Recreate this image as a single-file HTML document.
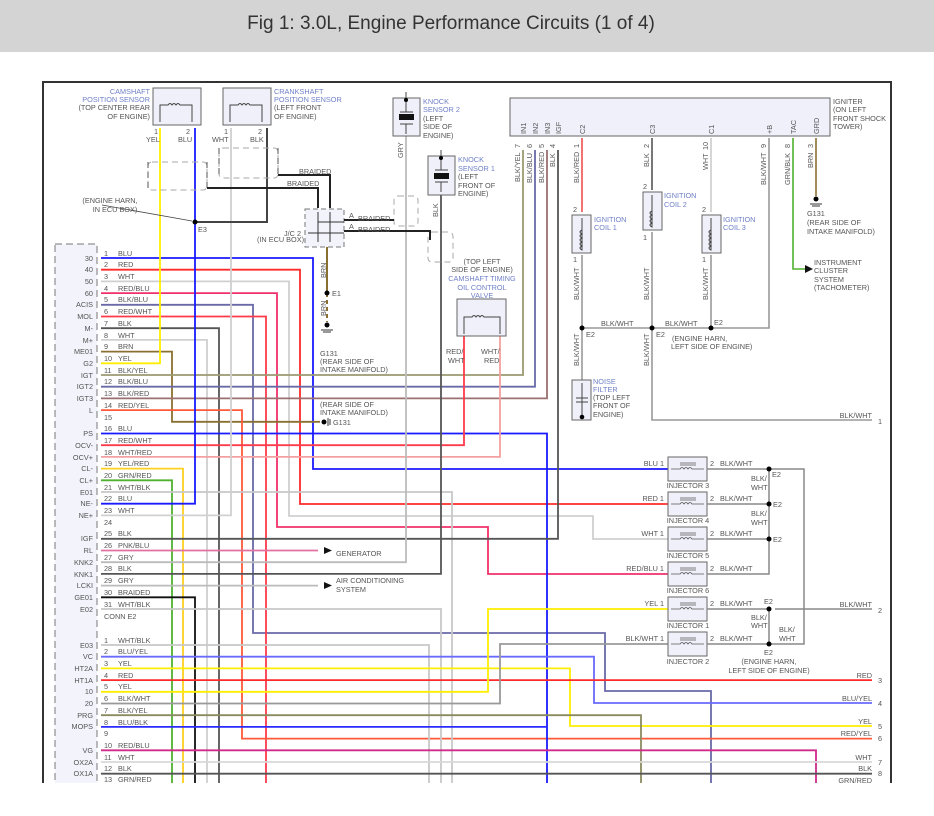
<!DOCTYPE html>
<html><head><meta charset="utf-8"><style>
html,body{margin:0;padding:0;background:#fff;width:934px;height:816px;overflow:hidden}
.hdr{position:absolute;left:0;top:0;width:934px;height:52px;background:#d4d4d4}
.hdr div{position:absolute;left:-16px;width:934px;top:13px;text-align:center;font:19px "Liberation Sans",sans-serif;color:#333}
svg{position:absolute;left:0;top:0}
text{font-family:"Liberation Sans",sans-serif;font-size:7.3px;fill:#555}
.c{fill:#7080c8}
.r{text-anchor:end}
.m{text-anchor:middle}
.w{fill:none;stroke-width:1.8}
</style></head><body>
<div class="hdr"><div>Fig 1: 3.0L, Engine Performance Circuits (1 of 4)</div></div>
<svg width="934" height="816" viewBox="0 0 934 816">
<rect x="0" y="783" width="934" height="33" fill="#fff"/>
<path d="M43 783V82H891V783" fill="none" stroke="#333" stroke-width="2"/>
<rect x="55" y="244" width="42" height="545" fill="#f3f3fc" stroke="#777" stroke-dasharray="7,4"/>

<g class="w">
<polyline stroke="#1a1aff" points="101,258 313,258 313,469 668,469"/>
<polyline stroke="#ff2a2a" points="101,269.7 300,269.7 300,504 668,504"/>
<polyline stroke="#d0d0d0" points="101,281.4 289,281.4 289,516 593,516 593,539 668,539"/>
<polyline stroke="#f0306a" points="101,293.1 277,293.1 277,527 488,527 488,574 668,574"/>
<polyline stroke="#6a6aa8" points="101,304.8 253,304.8 253,633 605,633 605,691 711,691 711,790"/>
<polyline stroke="#ff3a4a" points="101,316.5 266,316.5 266,790"/>
<polyline stroke="#555" points="101,328.2 219,328.2 219,790"/>
<polyline stroke="#d0d0d0" points="101,339.9 207,339.9 207,790"/>
<polyline stroke="#8a7030" points="101,351.6 172,351.6 172,421.8 320,421.8"/>
<polyline stroke="#ffee00" points="160,128 160,363.3 101,363.3"/>
<polyline stroke="#9a9a70" points="101,375 523,375 523,150"/>
<polyline stroke="#6a6aa8" points="101,386.7 535,386.7 535,150"/>
<polyline stroke="#9a7070" points="101,398.4 547,398.4 547,150"/>
<polyline stroke="#ff5a3a" points="101,410.1 242,410.1 242,738.6 872,738.6"/>
<polyline stroke="#1a1aff" points="101,433.5 547,433.5 547,790"/>
<polyline stroke="#ff3a4a" points="101,445.2 464,445.2 464,335"/>
<polyline stroke="#f4a0a0" points="101,456.9 500,456.9 500,335"/>
<polyline stroke="#ffd020" points="101,468.6 183,468.6 183,790"/>
<polyline stroke="#50b030" points="101,480.3 172,480.3 172,790"/>
<polyline stroke="#c8c8c8" points="101,492 452,492 452,790"/>
<polyline stroke="#1a1aff" points="195,128 195,503.7 101,503.7"/>
<polyline stroke="#d0d0d0" points="231,128 231,515.4 101,515.4"/>
<polyline stroke="#555" points="101,538.8 558,538.8 558,150"/>
<polyline stroke="#e070a0" points="101,550.5 318,550.5"/>
<polyline stroke="#bbb" points="101,562.2 406,562.2 406,136"/>
<polyline stroke="#555" points="101,573.9 441,573.9 441,195"/>
<polyline stroke="#bbb" points="101,585.6 318,585.6"/>
<polyline stroke="#111" points="101,597.3 195,597.3 195,790"/>
<polyline stroke="#c8c8c8" points="101,609 441,609 441,790"/>
<polyline stroke="#c8c8c8" points="101,645 429,645 429,790"/>
<polyline stroke="#6a6aff" points="101,656.7 594,656.7 594,703 872,703"/>
<polyline stroke="#ffee00" points="101,668.4 570,668.4 570,726 872,726"/>
<polyline stroke="#ff2a2a" points="101,680.1 872,680.1"/>
<polyline stroke="#ffee00" points="101,691.8 488,691.8 488,609 668,609"/>
<polyline stroke="#999" points="101,703.5 500,703.5 500,644 668,644"/>
<polyline stroke="#8a8a60" points="101,715.2 641,715.2 641,790"/>
<polyline stroke="#2a2aff" points="101,726.9 547,726.9"/>
<polyline stroke="#d02a8a" points="101,750.3 816,750.3 816,790"/>
<polyline stroke="#d8d8d8" points="101,762 872,762"/>
<polyline stroke="#555" points="101,773.7 872,773.7"/>
<polyline stroke="#50b030" points="101,785.4 872,785.4"/>
</g>
<polyline points="267,128 267,222 195,222" fill="none" stroke="#444" stroke-width="2"/>
<circle cx="195" cy="222" r="2.5" fill="#000"/>
<text x="198" y="232">E3</text>
<line x1="102" y1="205" x2="192" y2="221" stroke="#444" stroke-width="0.8"/>
<text x="110" y="203" style="text-anchor:middle">(ENGINE HARN,</text>
<text x="115" y="212" style="text-anchor:middle">IN ECU BOX)</text>

<g fill="none" stroke="#aaa" stroke-dasharray="6,4">
<rect x="148" y="162" width="59" height="28" rx="4"/>
<rect x="219" y="148" width="59" height="30" rx="4"/>
<rect x="394" y="196" width="24" height="30" rx="4"/>
<rect x="428" y="232" width="25" height="30" rx="4"/>
</g>
<path d="M148 162v28M219 148v30M207 162v28M278 148v30" stroke="#555" stroke-dasharray="6,4"/>
<polyline points="207,188 318,188 318,208" fill="none" stroke="#222" stroke-width="2"/>
<polyline points="278,175 330,175 330,208" fill="none" stroke="#222" stroke-width="2"/>
<text x="287" y="186">BRAIDED</text><text x="299" y="174">BRAIDED</text>
<rect x="305" y="209" width="39" height="38" fill="#f3f3fc" stroke="#777" stroke-dasharray="5,3"/>
<path d="M318 212v30M330 212v30M308 233h30M318 222h26M318 233h26" stroke="#333" fill="none"/>
<polyline points="344,220 394,220" stroke="#222" stroke-width="2"/>
<polyline points="344,231 430,231 430,240" stroke="#222" stroke-width="2" fill="none"/>
<text x="349" y="218">A</text><text x="358" y="221">BRAIDED</text>
<text x="349" y="229">A</text><text x="358" y="232">BRAIDED</text>
<text x="301" y="236" class="r">J/C 2</text><text x="304" y="242" class="r">(IN ECU BOX)</text>
<line x1="327" y1="247" x2="327" y2="293" stroke="#8a7030" stroke-width="2"/>
<line x1="327" y1="293" x2="327" y2="322" stroke="#8a7030" stroke-width="2" stroke-dasharray="4,3"/>
<circle cx="327" cy="293" r="2.5" fill="#000"/><text x="332" y="296">E1</text>
<text x="326" y="278" transform="rotate(-90 326 278)">BRN</text>
<text x="326" y="316" transform="rotate(-90 326 316)">BRN</text>
<circle cx="327" cy="325" r="2.5" fill="#000"/><path d="M321 330h12M323 332h8" stroke="#333"/>
<text x="320" y="356">G131</text><text x="320" y="364">(REAR SIDE OF</text><text x="320" y="372">INTAKE MANIFOLD)</text>
<text x="320" y="407">(REAR SIDE OF</text><text x="320" y="415">INTAKE MANIFOLD)</text>
<circle cx="324" cy="422" r="2.5" fill="#000"/><path d="M328 418v8M330 419v6" stroke="#333"/><text x="333" y="425">G131</text>

<rect x="153" y="88" width="48" height="37" fill="#f0f0fa" stroke="#666"/>
<rect x="223" y="88" width="48" height="37" fill="#f0f0fa" stroke="#666"/>
<path d="M160 122v-17h8q2-3 4 0q2-3 4 0q2-3 4 0h12v17M230 122v-17h8q2-3 4 0q2-3 4 0q2-3 4 0h12v17" fill="none" stroke="#444"/>
<text x="150" y="94" class="r c">CAMSHAFT</text><text x="150" y="102" class="r c">POSITION SENSOR</text>
<text x="150" y="110" class="r">(TOP CENTER REAR</text><text x="150" y="119" class="r">OF ENGINE)</text>
<text x="274" y="94" class="c">CRANKSHAFT</text><text x="274" y="102" class="c">POSITION SENSOR</text>
<text x="274" y="110">(LEFT FRONT</text><text x="274" y="119">OF ENGINE)</text>
<text x="154" y="134">1</text><text x="186" y="134">2</text><text x="146" y="142">YEL</text><text x="178" y="142">BLU</text>
<text x="224" y="134">1</text><text x="258" y="134">2</text><text x="212" y="142">WHT</text><text x="250" y="142">BLK</text>

<rect x="393" y="98" width="27" height="38" fill="#f0f0fa" stroke="#666"/>
<rect x="428" y="156" width="27" height="39" fill="#f0f0fa" stroke="#666"/>
<path d="M406 92v20M400 112h13M406 124v10M400 124h13M441 150v20M435 170h13M441 182v10M435 182h13" stroke="#444"/>
<rect x="399" y="114" width="15" height="6" fill="#111"/><rect x="434" y="173" width="15" height="6" fill="#111"/>
<circle cx="406" cy="100" r="2" fill="#000"/><circle cx="441" cy="158" r="2" fill="#000"/>
<text x="423" y="104" class="c">KNOCK</text><text x="423" y="112" class="c">SENSOR 2</text><text x="423" y="121">(LEFT</text><text x="423" y="129">SIDE OF</text><text x="423" y="138">ENGINE)</text>
<text x="458" y="162" class="c">KNOCK</text><text x="458" y="171" class="c">SENSOR 1</text><text x="458" y="179">(LEFT</text><text x="458" y="188">FRONT OF</text><text x="458" y="196">ENGINE)</text>
<text x="403" y="158" transform="rotate(-90 403 158)">GRY</text>
<text x="438" y="217" transform="rotate(-90 438 217)">BLK</text>

<text x="482" y="264" style="text-anchor:middle">(TOP LEFT</text>
<text x="482" y="272" style="text-anchor:middle">SIDE OF ENGINE)</text>
<text x="482" y="281" class="c" style="text-anchor:middle">CAMSHAFT TIMING</text>
<text x="482" y="290" class="c" style="text-anchor:middle">OIL CONTROL</text>
<text x="482" y="298" class="c" style="text-anchor:middle">VALVE</text>
<rect x="457" y="299" width="49" height="37" fill="#f0f0fa" stroke="#666"/>
<path d="M464 334v-17h8q2-3 4 0q2-3 4 0q2-3 4 0h16v17" fill="none" stroke="#444"/>
<text x="446" y="354">RED/</text><text x="448" y="363">WHT</text><text x="481" y="354">WHT/</text><text x="484" y="363">RED</text>
<path d="M324 547l8 3.5-8 3.5zM324 582l8 3.5-8 3.5z" fill="#111"/>
<text x="336" y="556">GENERATOR</text>
<text x="336" y="583">AIR CONDITIONING</text><text x="336" y="592">SYSTEM</text>

<rect x="510" y="98" width="320" height="38" fill="#f0f0fa" stroke="#666"/>
<text x="833" y="104">IGNITER</text><text x="833" y="112">(ON LEFT</text><text x="833" y="121">FRONT SHOCK</text><text x="833" y="129">TOWER)</text>
<g>
<text x="526" y="134" transform="rotate(-90 526 134)">IN1</text>
<text x="538" y="134" transform="rotate(-90 538 134)">IN2</text>
<text x="550" y="134" transform="rotate(-90 550 134)">IN3</text>
<text x="561" y="134" transform="rotate(-90 561 134)">IGF</text>
<text x="585" y="134" transform="rotate(-90 585 134)">C2</text>
<text x="655" y="134" transform="rotate(-90 655 134)">C3</text>
<text x="714" y="134" transform="rotate(-90 714 134)">C1</text>
<text x="772" y="134" transform="rotate(-90 772 134)">+B</text>
<text x="796" y="134" transform="rotate(-90 796 134)">TAC</text>
<text x="819" y="134" transform="rotate(-90 819 134)">GRD</text>
<text x="520" y="148" transform="rotate(-90 520 148)">7</text>
<text x="532" y="148" transform="rotate(-90 532 148)">6</text>
<text x="544" y="148" transform="rotate(-90 544 148)">5</text>
<text x="555" y="148" transform="rotate(-90 555 148)">4</text>
<text x="579" y="148" transform="rotate(-90 579 148)">1</text>
<text x="649" y="148" transform="rotate(-90 649 148)">2</text>
<text x="708" y="150" transform="rotate(-90 708 150)">10</text>
<text x="766" y="148" transform="rotate(-90 766 148)">9</text>
<text x="790" y="148" transform="rotate(-90 790 148)">8</text>
<text x="813" y="148" transform="rotate(-90 813 148)">3</text>
<text x="520" y="182" transform="rotate(-90 520 182)">BLK/YEL</text>
<text x="532" y="183" transform="rotate(-90 532 183)">BLK/BLU</text>
<text x="544" y="183" transform="rotate(-90 544 183)">BLK/RED</text>
<text x="555" y="167" transform="rotate(-90 555 167)">BLK</text>
<text x="579" y="183" transform="rotate(-90 579 183)">BLK/RED</text>
<text x="649" y="167" transform="rotate(-90 649 167)">BLK</text>
<text x="708" y="170" transform="rotate(-90 708 170)">WHT</text>
<text x="766" y="185" transform="rotate(-90 766 185)">BLK/WHT</text>
<text x="790" y="185" transform="rotate(-90 790 185)">GRN/BLK</text>
<text x="813" y="168" transform="rotate(-90 813 168)">BRN</text>
</g>
<g fill="none" stroke-width="1.6">
<line x1="582" y1="138" x2="582" y2="212" stroke="#f05050"/>
<line x1="652" y1="138" x2="652" y2="190" stroke="#555"/>
<line x1="711" y1="138" x2="711" y2="212" stroke="#ccc"/>
<polyline points="769,138 769,328 582,328" stroke="#999"/>
<polyline points="793,138 793,269 805,269" stroke="#50b030"/>
<line x1="816" y1="138" x2="816" y2="196" stroke="#8a7030"/>
<line x1="582" y1="255" x2="582" y2="380" stroke="#999"/>
<polyline points="652,232 652,420 872,420" stroke="#999"/>
<line x1="711" y1="255" x2="711" y2="328" stroke="#999"/>
</g>
<path d="M805 265l8 4-8 4z" fill="#111"/>
<circle cx="816" cy="199" r="2.5" fill="#000"/><path d="M810 204h12M812 206h8" stroke="#333"/>
<text x="807" y="216">G131</text><text x="807" y="225">(REAR SIDE OF</text><text x="807" y="234">INTAKE MANIFOLD)</text>
<text x="814" y="265">INSTRUMENT</text><text x="814" y="273">CLUSTER</text><text x="814" y="282">SYSTEM</text><text x="814" y="290">(TACHOMETER)</text>
<g fill="#f0f0fa" stroke="#666">
<rect x="572" y="215" width="19" height="38"/><rect x="643" y="192" width="19" height="38"/><rect x="702" y="215" width="19" height="38"/>
<rect x="572" y="380" width="19" height="40"/>
</g>
<path d="M582 218v32q-4-2 0-4q-4-2 0-4q-4-2 0-4q-4-2 0-4q-4-2 0-4M652 195v32q-4-2 0-4q-4-2 0-4q-4-2 0-4q-4-2 0-4M711 218v32q-4-2 0-4q-4-2 0-4q-4-2 0-4q-4-2 0-4q-4-2 0-4M582 383v34M576 398h12M576 402h12" fill="none" stroke="#444"/>
<text x="594" y="222" class="c">IGNITION</text><text x="594" y="230" class="c">COIL 1</text>
<text x="664" y="198" class="c">IGNITION</text><text x="664" y="207" class="c">COIL 2</text>
<text x="723" y="222" class="c">IGNITION</text><text x="723" y="230" class="c">COIL 3</text>
<text x="573" y="212">2</text><text x="643" y="189">2</text><text x="702" y="212">2</text>
<text x="573" y="262">1</text><text x="643" y="240">1</text><text x="702" y="262">1</text>
<text x="579" y="300" transform="rotate(-90 579 300)">BLK/WHT</text>
<text x="649" y="300" transform="rotate(-90 649 300)">BLK/WHT</text>
<text x="708" y="300" transform="rotate(-90 708 300)">BLK/WHT</text>
<text x="579" y="366" transform="rotate(-90 579 366)">BLK/WHT</text>
<text x="649" y="366" transform="rotate(-90 649 366)">BLK/WHT</text>
<circle cx="582" cy="328" r="2.5" fill="#000"/><circle cx="652" cy="328" r="2.5" fill="#000"/><circle cx="711" cy="328" r="2.5" fill="#000"/>
<text x="601" y="326">BLK/WHT</text><text x="665" y="326">BLK/WHT</text>
<text x="586" y="337">E2</text><text x="656" y="337">E2</text><text x="714" y="325">E2</text>
<text x="672" y="341">(ENGINE HARN,</text><text x="671" y="349">LEFT SIDE OF ENGINE)</text>
<text x="593" y="384" class="c">NOISE</text><text x="593" y="392" class="c">FILTER</text><text x="593" y="400">(TOP LEFT</text><text x="593" y="408">FRONT OF</text><text x="593" y="417">ENGINE)</text>
<circle cx="582" cy="417" r="2.3" fill="#000"/>

<g fill="#f0f0fa" stroke="#666">
<rect x="668" y="457" width="39" height="24"/><rect x="668" y="492" width="39" height="24"/><rect x="668" y="527" width="39" height="24"/>
<rect x="668" y="562" width="39" height="24"/><rect x="668" y="597" width="39" height="24"/><rect x="668" y="632" width="39" height="24"/>
</g>
<g fill="none" stroke="#555" stroke-width="0.8">
<path d="M671 469h9q2-3 4 0q2-3 4 0q2-3 4 0h12M680 463h16M680 465h16"/>
<path d="M671 504h9q2-3 4 0q2-3 4 0q2-3 4 0h12M680 498h16M680 500h16"/>
<path d="M671 539h9q2-3 4 0q2-3 4 0q2-3 4 0h12M680 533h16M680 535h16"/>
<path d="M671 574h9q2-3 4 0q2-3 4 0q2-3 4 0h12M680 568h16M680 570h16"/>
<path d="M671 609h9q2-3 4 0q2-3 4 0q2-3 4 0h12M680 603h16M680 605h16"/>
<path d="M671 644h9q2-3 4 0q2-3 4 0q2-3 4 0h12M680 638h16M680 640h16"/>
</g>
<g fill="none" stroke="#888" stroke-width="1.5">
<path d="M707 469h62M707 504h62M707 539h62M707 574h62V469M707 609h62M707 644h62V609M769 469h35V644h-35M775 609h97"/>
</g>
<g fill="#000"><circle cx="769" cy="469" r="2.5"/><circle cx="769" cy="504" r="2.5"/><circle cx="769" cy="539" r="2.5"/><circle cx="769" cy="609" r="2.5"/><circle cx="769" cy="644" r="2.5"/></g>
<text x="688" y="488" style="text-anchor:middle">INJECTOR 3</text>
<text x="688" y="523" style="text-anchor:middle">INJECTOR 4</text>
<text x="688" y="558" style="text-anchor:middle">INJECTOR 5</text>
<text x="688" y="593" style="text-anchor:middle">INJECTOR 6</text>
<text x="688" y="628" style="text-anchor:middle">INJECTOR 1</text>
<text x="688" y="664" style="text-anchor:middle">INJECTOR 2</text>
<text x="664" y="466" class="r">BLU 1</text><text x="664" y="501" class="r">RED 1</text><text x="664" y="536" class="r">WHT 1</text>
<text x="664" y="571" class="r">RED/BLU 1</text><text x="664" y="606" class="r">YEL 1</text><text x="664" y="641" class="r">BLK/WHT 1</text>
<text x="710" y="466">2</text><text x="720" y="466">BLK/WHT</text>
<text x="710" y="501">2</text><text x="720" y="501">BLK/WHT</text>
<text x="710" y="536">2</text><text x="720" y="536">BLK/WHT</text>
<text x="710" y="571">2</text><text x="720" y="571">BLK/WHT</text>
<text x="710" y="606">2</text><text x="720" y="606">BLK/WHT</text>
<text x="710" y="641">2</text><text x="720" y="641">BLK/WHT</text>
<text x="772" y="477">E2</text><text x="773" y="507">E2</text><text x="773" y="542">E2</text><text x="764" y="604">E2</text><text x="764" y="655">E2</text>
<text x="751" y="481">BLK/</text><text x="751" y="490">WHT</text>
<text x="751" y="516">BLK/</text><text x="751" y="525">WHT</text>
<text x="751" y="620">BLK/</text><text x="751" y="628">WHT</text>
<text x="779" y="632">BLK/</text><text x="779" y="641">WHT</text>
<text x="769" y="664" style="text-anchor:middle">(ENGINE HARN,</text><text x="769" y="673" style="text-anchor:middle">LEFT SIDE OF ENGINE)</text>

<text x="872" y="418" class="r">BLK/WHT</text><text x="878" y="424">1</text>
<text x="872" y="607" class="r">BLK/WHT</text><text x="878" y="613">2</text>
<text x="872" y="678" class="r">RED</text><text x="878" y="683">3</text>
<text x="872" y="701" class="r">BLU/YEL</text><text x="878" y="706">4</text>
<text x="872" y="724" class="r">YEL</text><text x="878" y="729">5</text>
<text x="872" y="736" class="r">RED/YEL</text><text x="878" y="741">6</text>
<text x="872" y="760" class="r">WHT</text><text x="878" y="765">7</text>
<text x="872" y="771" class="r">BLK</text><text x="878" y="776">8</text>
<text x="872" y="783" class="r">GRN/RED</text>

<g>
<text x="93" y="261" class="r">30</text><text x="93" y="272" class="r">40</text><text x="93" y="284" class="r">50</text><text x="93" y="296" class="r">60</text>
<text x="93" y="307" class="r">ACIS</text><text x="93" y="319" class="r">MOL</text><text x="93" y="331" class="r">M-</text><text x="93" y="343" class="r">M+</text>
<text x="93" y="354" class="r">ME01</text><text x="93" y="366" class="r">G2</text><text x="93" y="378" class="r">IGT</text><text x="93" y="389" class="r">IGT2</text>
<text x="93" y="401" class="r">IGT3</text><text x="93" y="413" class="r">L</text>
<text x="93" y="436" class="r">PS</text><text x="93" y="448" class="r">OCV-</text><text x="93" y="460" class="r">OCV+</text><text x="93" y="471" class="r">CL-</text>
<text x="93" y="483" class="r">CL+</text><text x="93" y="495" class="r">E01</text><text x="93" y="506" class="r">NE-</text><text x="93" y="518" class="r">NE+</text>
<text x="93" y="541" class="r">IGF</text><text x="93" y="553" class="r">RL</text><text x="93" y="565" class="r">KNK2</text><text x="93" y="577" class="r">KNK1</text>
<text x="93" y="588" class="r">LCKI</text><text x="93" y="600" class="r">GE01</text><text x="93" y="612" class="r">E02</text>
<text x="93" y="648" class="r">E03</text><text x="93" y="659" class="r">VC</text><text x="93" y="671" class="r">HT2A</text><text x="93" y="683" class="r">HT1A</text>
<text x="93" y="694" class="r">10</text><text x="93" y="706" class="r">20</text><text x="93" y="718" class="r">PRG</text><text x="93" y="729" class="r">MOPS</text>
<text x="93" y="753" class="r">VG</text><text x="93" y="765" class="r">OX2A</text><text x="93" y="776" class="r">OX1A</text>
</g>
<g>
<text x="104" y="256">1</text><text x="118" y="256">BLU</text>
<text x="104" y="267">2</text><text x="118" y="267">RED</text>
<text x="104" y="279">3</text><text x="118" y="279">WHT</text>
<text x="104" y="291">4</text><text x="118" y="291">RED/BLU</text>
<text x="104" y="302">5</text><text x="118" y="302">BLK/BLU</text>
<text x="104" y="314">6</text><text x="118" y="314">RED/WHT</text>
<text x="104" y="326">7</text><text x="118" y="326">BLK</text>
<text x="104" y="338">8</text><text x="118" y="338">WHT</text>
<text x="104" y="349">9</text><text x="118" y="349">BRN</text>
<text x="104" y="361">10</text><text x="118" y="361">YEL</text>
<text x="104" y="373">11</text><text x="118" y="373">BLK/YEL</text>
<text x="104" y="384">12</text><text x="118" y="384">BLK/BLU</text>
<text x="104" y="396">13</text><text x="118" y="396">BLK/RED</text>
<text x="104" y="408">14</text><text x="118" y="408">RED/YEL</text>
<text x="104" y="420">15</text>
<text x="104" y="431">16</text><text x="118" y="431">BLU</text>
<text x="104" y="443">17</text><text x="118" y="443">RED/WHT</text>
<text x="104" y="455">18</text><text x="118" y="455">WHT/RED</text>
<text x="104" y="466">19</text><text x="118" y="466">YEL/RED</text>
<text x="104" y="478">20</text><text x="118" y="478">GRN/RED</text>
<text x="104" y="490">21</text><text x="118" y="490">WHT/BLK</text>
<text x="104" y="501">22</text><text x="118" y="501">BLU</text>
<text x="104" y="513">23</text><text x="118" y="513">WHT</text>
<text x="104" y="525">24</text>
<text x="104" y="536">25</text><text x="118" y="536">BLK</text>
<text x="104" y="548">26</text><text x="118" y="548">PNK/BLU</text>
<text x="104" y="560">27</text><text x="118" y="560">GRY</text>
<text x="104" y="571">28</text><text x="118" y="571">BLK</text>
<text x="104" y="583">29</text><text x="118" y="583">GRY</text>
<text x="104" y="595">30</text><text x="118" y="595">BRAIDED</text>
<text x="104" y="607">31</text><text x="118" y="607">WHT/BLK</text>
<text x="104" y="619">CONN E2</text>
<text x="104" y="643">1</text><text x="118" y="643">WHT/BLK</text>
<text x="104" y="654">2</text><text x="118" y="654">BLU/YEL</text>
<text x="104" y="666">3</text><text x="118" y="666">YEL</text>
<text x="104" y="678">4</text><text x="118" y="678">RED</text>
<text x="104" y="689">5</text><text x="118" y="689">YEL</text>
<text x="104" y="701">6</text><text x="118" y="701">BLK/WHT</text>
<text x="104" y="713">7</text><text x="118" y="713">BLK/YEL</text>
<text x="104" y="725">8</text><text x="118" y="725">BLU/BLK</text>
<text x="104" y="736">9</text>
<text x="104" y="748">10</text><text x="118" y="748">RED/BLU</text>
<text x="104" y="760">11</text><text x="118" y="760">WHT</text>
<text x="104" y="771">12</text><text x="118" y="771">BLK</text>
<text x="104" y="782">13</text><text x="118" y="782">GRN/RED</text>
</g>
<rect x="0" y="783" width="934" height="33" fill="#fff"/>
</svg>
</body></html>
